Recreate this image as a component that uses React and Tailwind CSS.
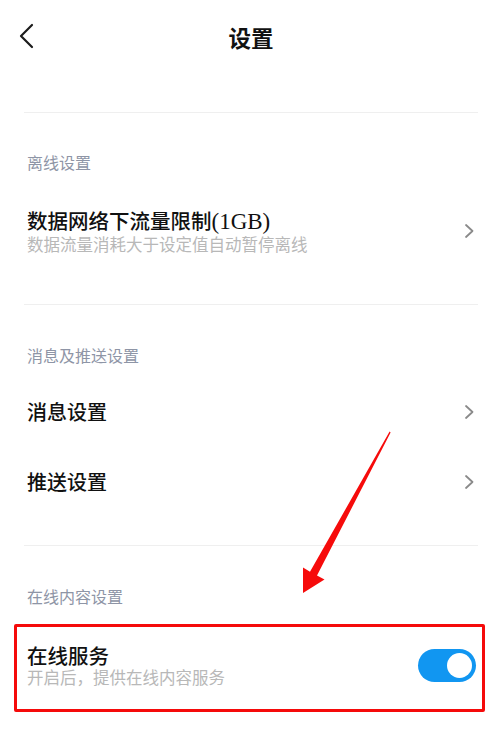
import React from "react";

const CJK = { fontFamily: '"Noto Sans CJK SC", "Noto Sans", sans-serif' };

function ChevronRight() {
  return (
    <svg width="12" height="16" viewBox="0 0 12 16" className="shrink-0">
      <polyline points="3,2 9.5,8 3,14" fill="none" stroke="#8a8a8a" strokeWidth="1.8" strokeLinecap="round" strokeLinejoin="round" />
    </svg>
  );
}

function Divider() {
  return <div className="mx-[24px] h-px bg-[#efefef]" />;
}

function Label({ children }) {
  return <div className="pt-[39px] text-[16px] leading-[22px] text-[#8e95a6]">{children}</div>;
}

function NavRow({ children }) {
  return (
    <div className="h-[70px] flex items-center justify-between">
      <div className="text-[20px] leading-[24px] font-medium text-[#111]">{children}</div>
      <ChevronRight />
    </div>
  );
}

export default function App() {
  return (
    <div className="relative w-[502px] h-[736px] bg-white overflow-hidden" style={CJK}>
      {/* Header */}
      <div className="relative h-[74px] flex items-center justify-center">
        <svg width="20" height="28" viewBox="0 0 20 28" className="absolute left-[16px] top-[22px]">
          <polyline points="16,3 5,14 16,25" fill="none" stroke="#1c1c1c" strokeWidth="2.2" strokeLinecap="round" strokeLinejoin="round" />
        </svg>
        <div className="text-[22.5px] leading-[30px] font-bold text-[#111]">设置</div>
      </div>
      <div className="h-[38px]" />

      {/* Section 1 */}
      <Divider />
      <div className="px-[27px]">
        <div className="pt-[38px] text-[16px] leading-[22px] text-[#8e95a6]">离线设置</div>
        <div className="mt-[35px] flex items-center justify-between">
          <div>
            <div className="text-[20.5px] leading-[24px] font-medium text-[#111]">
              数据网络下流量限制<span style={{ fontFamily: '"Liberation Serif", serif' }} className="text-[23px]">(1GB)</span>
            </div>
            <div className="text-[16.5px] leading-[20px] text-[#b8b8b8]">数据流量消耗大于设定值自动暂停离线</div>
          </div>
          <ChevronRight />
        </div>
      </div>
      <div className="h-[50px]" />

      {/* Section 2 */}
      <Divider />
      <div className="px-[27px]">
        <Label>消息及推送设置</Label>
        <div className="h-[11px]" />
        <NavRow>消息设置</NavRow>
        <NavRow>推送设置</NavRow>
      </div>
      <div className="h-[28px]" />

      {/* Section 3 */}
      <Divider />
      <div className="px-[27px]">
        <Label>在线内容设置</Label>
        <div className="mt-[36px] flex items-center justify-between">
          <div>
            <div className="text-[20.5px] leading-[24px] font-medium text-[#111]">在线服务</div>
            <div className="text-[16.5px] leading-[20px] text-[#b8b8b8]">开启后，提供在线内容服务</div>
          </div>
          <div className="w-[58px] h-[33px] rounded-full bg-[#1196f1] flex items-center justify-end pr-[4px] mr-[-1px]">
            <div className="w-[25px] h-[25px] rounded-full bg-white" />
          </div>
        </div>
      </div>

      {/* Annotation: red box */}
      <div className="absolute left-[14px] top-[624px] w-[471px] h-[88px] border-[3.5px] border-[#f50a0a] rounded-[2px] pointer-events-none" />

      {/* Annotation: arrow */}
      <svg className="absolute left-0 top-0 pointer-events-none" width="502" height="736" viewBox="0 0 502 736">
        <polygon
          points="389.6,431.6 390.6,432.4 317,575.5 324.5,579.5 303,593 303,567.5 310,571.7"
          fill="#f60b0b"
        />
      </svg>
    </div>
  );
}
